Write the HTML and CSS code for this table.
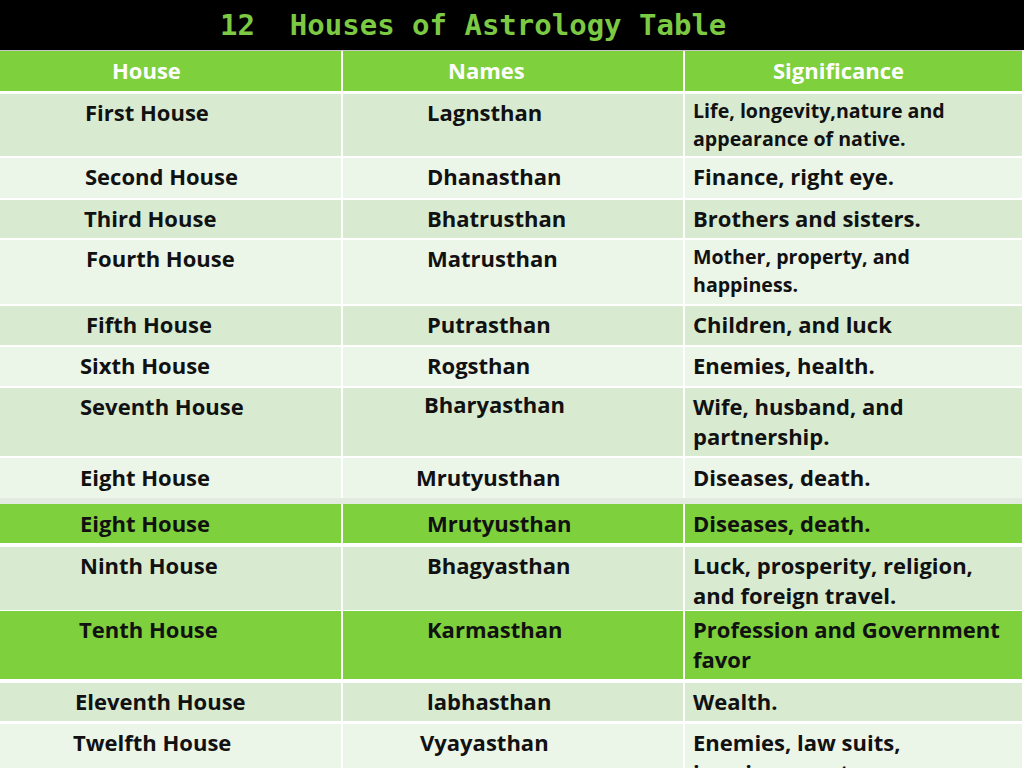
FILE: index.html
```html
<!DOCTYPE html>
<html lang="en">
<head>
<meta charset="utf-8">
<title>12 Houses of Astrology Table</title>
<link rel="stylesheet" href="styles.css">
</head>
<body>
<header class="title-bar"><h1 class="title">12  Houses of Astrology Table</h1></header>
<main class="table">
  <div class="row head">
    <div class="cell hd1">House</div>
    <div class="cell hd2">Names</div>
    <div class="cell hd3">Significance</div>
  </div>
  <div class="row dark h62 gap3">
    <div class="cell c1">First House</div>
    <div class="cell c2">Lagnsthan</div>
    <div class="cell c3 small">Life, longevity,nature and<br>appearance of native.</div>
  </div>
  <div class="row light h40">
    <div class="cell c1">Second House</div>
    <div class="cell c2">Dhanasthan</div>
    <div class="cell c3">Finance, right eye.</div>
  </div>
  <div class="row dark h38">
    <div class="cell c1 in-1">Third House</div>
    <div class="cell c2">Bhatrusthan</div>
    <div class="cell c3">Brothers and sisters.</div>
  </div>
  <div class="row light h64">
    <div class="cell c1 in1">Fourth House</div>
    <div class="cell c2">Matrusthan</div>
    <div class="cell c3 small">Mother, property, and<br>happiness.</div>
  </div>
  <div class="row dark h39">
    <div class="cell c1 in1">Fifth House</div>
    <div class="cell c2">Putrasthan</div>
    <div class="cell c3">Children, and luck</div>
  </div>
  <div class="row light h39">
    <div class="cell c1 in-5">Sixth House</div>
    <div class="cell c2">Rogsthan</div>
    <div class="cell c3">Enemies, health.</div>
  </div>
  <div class="row dark h68 lower">
    <div class="cell c1 in-5">Seventh House</div>
    <div class="cell c2 n-3 up2">Bharyasthan</div>
    <div class="cell c3">Wife, husband, and<br>partnership.</div>
  </div>
  <div class="row light h40 lower low2">
    <div class="cell c1 in-5">Eight House</div>
    <div class="cell c2 n-11">Mrutyusthan</div>
    <div class="cell c3">Diseases, death.</div>
  </div>
  <div class="strip"></div>
  <div class="row green h39 lower low2 gap0">
    <div class="cell c1 in-5">Eight House</div>
    <div class="cell c2">Mrutyusthan</div>
    <div class="cell c3">Diseases, death.</div>
  </div>
  <div class="row dark h61 lower gap4">
    <div class="cell c1 in-5">Ninth House</div>
    <div class="cell c2">Bhagyasthan</div>
    <div class="cell c3">Luck, prosperity, religion,<br>and foreign travel.</div>
  </div>
  <div class="row green h68 lower gap3">
    <div class="cell c1 in-6">Tenth House</div>
    <div class="cell c2">Karmasthan</div>
    <div class="cell c3">Profession and Government<br>favor</div>
  </div>
  <div class="row dark h38 lower gap4">
    <div class="cell c1 in-10">Eleventh House</div>
    <div class="cell c2">labhasthan</div>
    <div class="cell c3">Wealth.</div>
  </div>
  <div class="row light h61 lower gap3 up">
    <div class="cell c1 in-12">Twelfth House</div>
    <div class="cell c2 n-7">Vyayasthan</div>
    <div class="cell c3">Enemies, law suits,<br>imprisonment.</div>
  </div>
</main>
</body>
</html>
```
FILE: styles.css
```css
html, body {
  margin: 0;
  padding: 0;
  background: #ffffff;
  width: 1024px;
  height: 768px;
  overflow: hidden;
}
body {
  font-family: "Open Sans", Lato, sans-serif;
  font-weight: 700;
  color: #111111;
}
.title-bar {
  background: #000000;
  height: 50px;
  display: flex;
  align-items: center;
  padding-left: 220px;
}
.title {
  margin: 0;
  font-family: "DejaVu Sans Mono", "Liberation Mono", monospace;
  font-weight: 700;
  font-size: 29px;
  line-height: 52px;
  white-space: pre;
  color: #7cc943;
}
.table {
  width: 1022px;
  display: flex;
  flex-direction: column;
}
.row {
  display: grid;
  grid-template-columns: 341px 340px 337px;
  column-gap: 2px;
  margin-top: 2px;
}
.row .cell { box-sizing: border-box; }
.cell {
  font-size: 22px;
  line-height: 28px;
  padding-top: 4px;
  white-space: nowrap;
}
.head {
  margin-top: 0;
  border-top: 1px solid #c8c8c8;
  height: 40px;
}
.head .cell {
  background: #7ed03c;
  color: #ffffff;
  line-height: 38px;
  padding-top: 0;
}
.head .hd1 { padding-left: 112px; }
.head .hd2 { padding-left: 105px; }
.head .hd3 { padding-left: 88px; }
.gap0 { margin-top: 0; }
.gap3 { margin-top: 3px; }
.gap4 { margin-top: 4px; }
.h38 { height: 38px; }
.h39 { height: 39px; }
.h40 { height: 40px; }
.h61 { height: 61px; }
.h62 { height: 62px; }
.h64 { height: 64px; }
.h68 { height: 68px; }
.dark .cell { background: #d8ebd1; }
.light .cell { background: #ebf5e8; }
.green .cell { background: #7ed03c; }
.c1 { padding-left: 85px; }
.c2 { padding-left: 84px; }
.c3 { padding-left: 8px; }
.row .in1 { padding-left: 86px; }
.row .in-1 { padding-left: 84px; }
.row .in-5 { padding-left: 80px; }
.row .in-6 { padding-left: 79px; }
.row .in-10 { padding-left: 75px; }
.row .in-12 { padding-left: 73px; }
.row .n-3 { padding-left: 81px; }
.row .n-7 { padding-left: 77px; }
.row .n-11 { padding-left: 73px; }
.row .small {
  font-size: 19.6px;
  line-height: 28px;
  padding-top: 3px;
}
.lower .cell {
  line-height: 30px;
  padding-top: 3px;
}
.lower .up2 { padding-top: 1px; }
.low2 .cell { padding-top: 4px; }
.up .cell { padding-top: 3px; }
.strip {
  height: 6px;
  background: #e3ebe1;
}
```
